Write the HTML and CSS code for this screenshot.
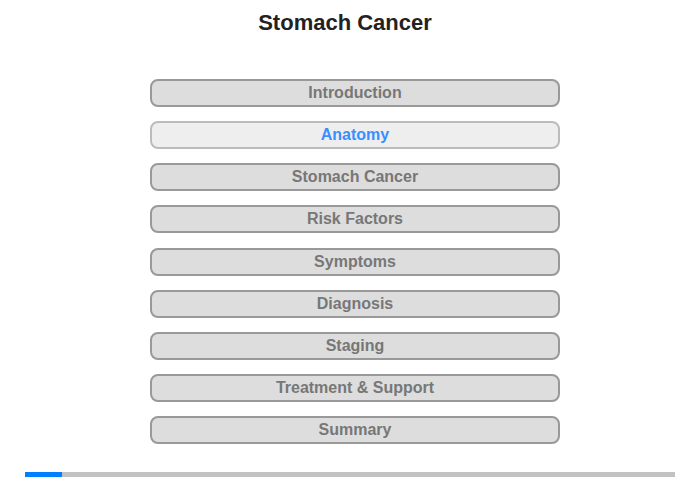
FILE: index.html
```html
<!DOCTYPE html>
<html lang="en">

<head>
    <meta charset="utf-8">
    <title>Stomach Cancer</title>
    <link rel="stylesheet" href="styles.css">
</head>

<body>

    <header>
        <h1>Stomach Cancer</h1>
    </header>

    <main>
        <div class="menu">
            <button class="item">Introduction</button>
            <button class="item active">Anatomy</button>
            <button class="item">Stomach Cancer</button>
            <button class="item">Risk Factors</button>
            <button class="item">Symptoms</button>
            <button class="item">Diagnosis</button>
            <button class="item">Staging</button>
            <button class="item">Treatment &amp; Support</button>
            <button class="item">Summary</button>
        </div>
    </main>

    <!-- progress -->
    <div class="progress">
        <div class="progress-fill" style="width: 37px;"></div>
    </div>

</body>

</html>
```

FILE: styles.css
```css
body {
    font-family: "Liberation Sans", Arial, sans-serif;
    margin: 0;
    padding: 0;
    background: #fff;
}

header {
    text-align: center;
    padding-top: 10px;
    padding-right: 10px;
}

header h1 {
    margin: 0;
    font-size: 22px;
    line-height: 26px;
    color: #222;
}

main {
    padding-top: 43px;
}

.menu {
    width: 410px;
    margin-left: 150px;
    display: flex;
    flex-direction: column;
    gap: 14.125px;
}

.item {
    height: 28px;
    box-sizing: border-box;
    border: 2px solid #999;
    border-radius: 8px;
    background-color: #ddd;
    color: #777;
    font-family: "Liberation Sans", Arial, sans-serif;
    font-weight: bold;
    font-size: 16px;
    padding: 0;
}

.item.active {
    border-color: #bbb;
    background-color: #eee;
    color: #3a8eff;
}

.progress {
    margin: 28px 25px 0;
    height: 5px;
    background-color: #c2c2c2;
}

.progress-fill {
    height: 100%;
    background-color: #0080ff;
}
```
